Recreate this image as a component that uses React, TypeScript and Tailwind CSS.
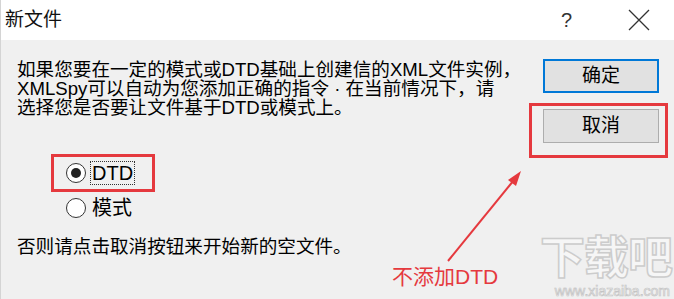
import React from 'react'

const cjk = { fontFamily: '"Liberation Sans", "Noto Sans CJK SC", sans-serif' }

function Radio({ checked, label }: { checked?: boolean; label: string }) {
  return (
    <div className="flex items-center gap-[4px]">
      <span className="flex h-[20px] w-[20px] items-center justify-center rounded-full border-[1.5px] border-[#333] bg-white">
        {checked && <span className="h-[10px] w-[10px] rounded-full bg-[#222]" />}
      </span>
      <span
        className={
          checked
            ? 'border border-dotted border-[#333] px-[1px] text-[20px] leading-[22px] text-black'
            : 'px-[2px] text-[20px] leading-[22px] text-black'
        }
      >
        {label}
      </span>
    </div>
  )
}

export default function App() {
  return (
    <div className="relative h-[299px] w-[674px] overflow-hidden bg-[#f0f0f0]" style={cjk}>
      <div className="flex h-[40px] items-center justify-between border-l border-[#d4d4d4] bg-white">
        <span className="pl-[4px] text-[19px] text-[#111]">新文件</span>
        <div className="flex items-center">
          <span className="mr-[56px] text-[20px] font-light text-[#333]">?</span>
          <svg width="22" height="22" viewBox="0 0 22 22" className="mr-[24px]">
            <path d="M1 1 L21 21 M21 1 L1 21" stroke="#333" strokeWidth="1.3" fill="none" />
          </svg>
        </div>
      </div>

      <div className="flex h-[259px] justify-between border-l border-[#d4d4d4]">
        <div className="min-w-0 pl-[16px] pt-[20px]">
          <p className="w-[500px] whitespace-nowrap text-[18.6px] leading-[19px] text-black">
            如果您要在一定的模式或DTD基础上创建信的XML文件实例，
            <br />
            XMLSpy可以自动为您添加正确的指令 · 在当前情况下，请
            <br />
            选择您是否要让文件基于DTD或模式上。
          </p>
          <div className="ml-[34px] mt-[37px] flex flex-col gap-[5px]">
            <div className="flex h-[38px] w-[104px] items-center border-[3px] border-[#e5393e] pl-[12px]">
              <Radio checked label="DTD" />
            </div>
            <div className="pl-[15px]">
              <Radio label="模式" />
            </div>
          </div>
          <p className="mt-[18px] text-[18.6px] leading-[20px] text-black">否则请点击取消按钮来开始新的空文件。</p>
        </div>

        <div className="flex shrink-0 flex-col pr-[6px] pt-[19px]">
          <button className="ml-[14px] mr-[9px] flex h-[34px] w-[116px] items-center justify-center border-2 border-[#0078d7] bg-[#e1e1e1] text-[19px] text-black">
            确定
          </button>
          <div className="mt-[10px] border-[3px] border-[#e5393e] pb-[12px] pl-[11px] pr-[6px] pt-[3px]">
            <button className="flex h-[34px] w-[116px] items-center justify-center border border-[#adadad] bg-[#e1e1e1] text-[19px] text-black">
              取消
            </button>
          </div>
        </div>
      </div>

      <svg className="absolute left-0 top-0" width="674" height="299" viewBox="0 0 674 299">
        <line x1="448" y1="261" x2="514" y2="180" stroke="#e5393e" strokeWidth="2" />
        <polygon points="521,171 508,180 516,186" fill="#e5393e" />
      </svg>
      <span className="absolute left-[392px] top-[264px] text-[21px] leading-[26px] text-[#e5393e]">不添加DTD</span>

      <div className="absolute right-[2px] top-[234px] flex flex-col items-end">
        <span className="text-[45px] font-bold leading-[50px] tracking-[-1px] text-[#f6f6f6] [-webkit-text-stroke:1.5px_#cccccc]">
          下载吧
        </span>
        <span className="pr-[2px] text-[14px] leading-[14px] text-[#f6f6f6] [-webkit-text-stroke:0.7px_#c4c4c4]">
          www.xiazaiba.com
        </span>
      </div>
    </div>
  )
}
